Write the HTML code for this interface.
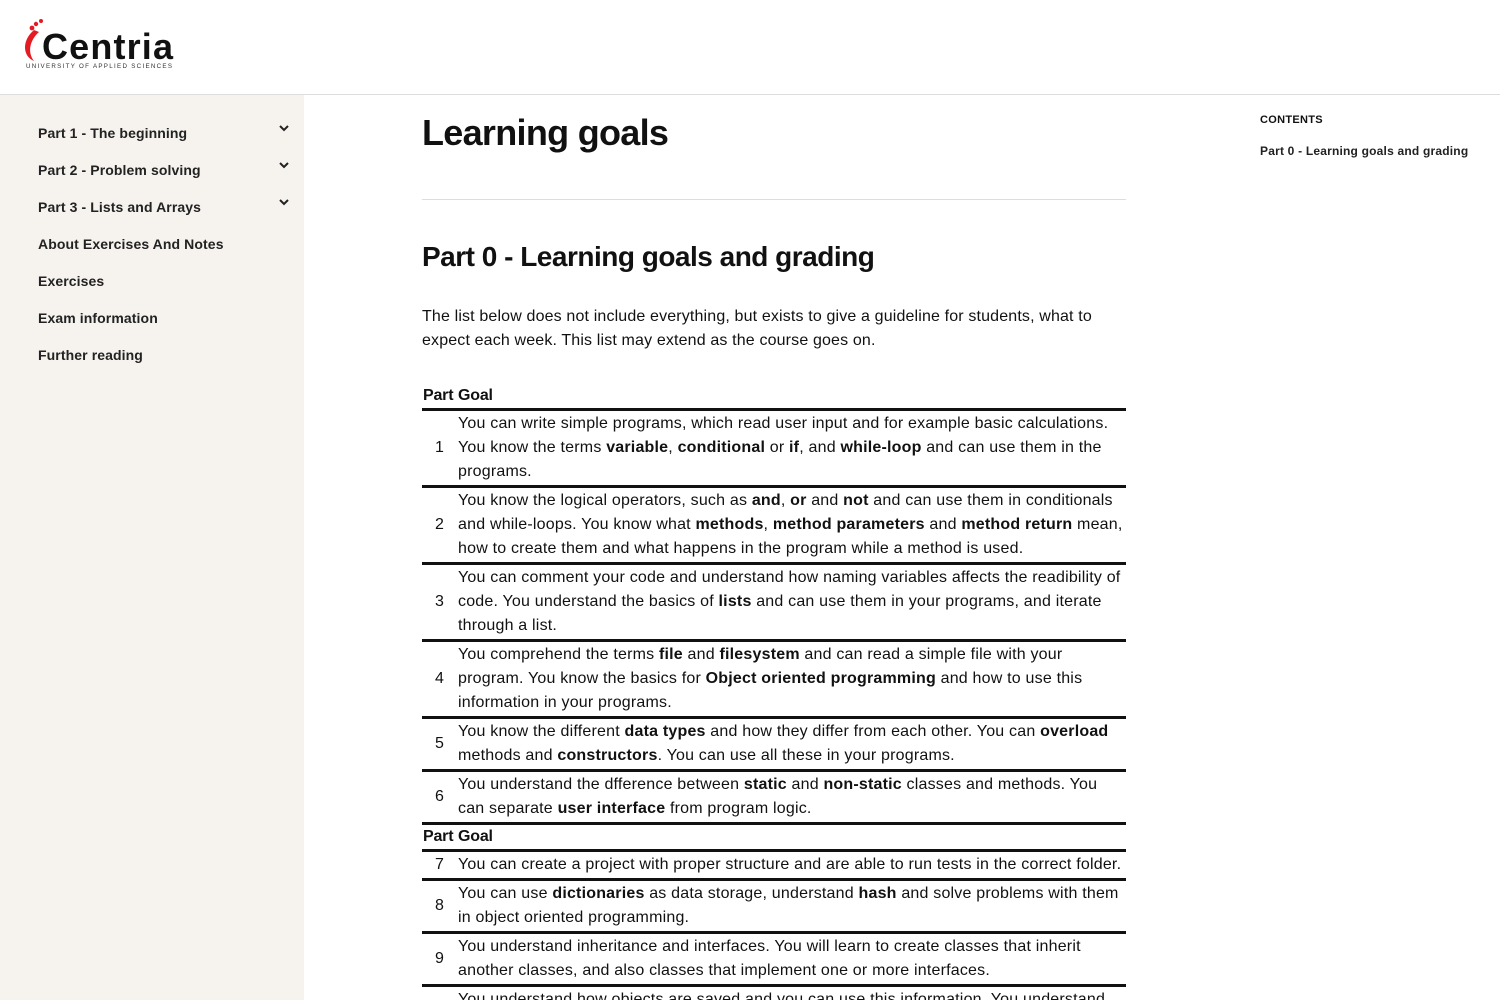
<!DOCTYPE html>
<html><head><meta charset="utf-8">
<style>
*{box-sizing:border-box;margin:0;padding:0}
html,body{width:1500px;height:1000px;overflow:hidden}
body{font-family:"Liberation Sans",sans-serif;color:#111;background:#fff;position:relative}
.hdr{position:absolute;left:0;top:0;width:1500px;height:95px;border-bottom:1px solid #ddd;background:#fff}
.side{position:absolute;left:0;top:95px;width:304px;height:905px;background:#f6f3ef}
.side div{position:absolute;left:38px;font-size:14px;font-weight:bold;color:#222;letter-spacing:0.1px}
.chev{position:absolute;left:278px;width:12px;height:8px}
.main{position:absolute;left:422px;top:95px;width:704px;height:905px;overflow:hidden}
h1{position:absolute;top:17px;font-size:36px;font-weight:bold;letter-spacing:-0.7px}
hr{position:absolute;top:104px;width:704px;border:0;border-top:1px solid #ddd}
h2{position:absolute;top:146px;font-size:28px;font-weight:bold;letter-spacing:-0.5px;white-space:nowrap}
p{position:absolute;top:210px;font-size:16px;line-height:24px;width:704px;letter-spacing:0.15px}
table{position:absolute;top:289px;width:704px;border-collapse:collapse;font-size:16px;line-height:24px;letter-spacing:0.2px}
th{text-align:left;font-weight:bold;padding:0 1px;height:24px;letter-spacing:-0.2px}
td{padding:1px 1px;vertical-align:middle}
td:first-child{text-align:center;width:35px}
tr{border-bottom:3px solid #111}
.toc{position:absolute;left:1260px;top:114px;font-size:11px;font-weight:bold;letter-spacing:0.3px}
.toc2{position:absolute;left:1260px;top:144px;font-size:12px;font-weight:bold;color:#222;letter-spacing:0.2px}
</style></head><body>
<div class="hdr">
<svg style="position:absolute;left:22px;top:16px" width="156" height="56">
<circle cx="19" cy="5" r="2" fill="#e41b23"/><circle cx="14" cy="8" r="2.2" fill="#e41b23"/><circle cx="10" cy="12" r="2.4" fill="#e41b23"/>
<path d="M12 14 C0 24 0 40 12 45 C5 36 8 24 17 16 Z" fill="#e41b23"/>
<text x="20" y="43" font-family="Liberation Sans" font-weight="bold" font-size="36" fill="#111" textLength="130" letter-spacing="-1">Centria</text>
<text x="4" y="52" font-family="Liberation Sans" font-size="6.2" fill="#333" textLength="146">UNIVERSITY OF APPLIED SCIENCES</text>
</svg>
</div>
<div class="side">
<div style="top:30px">Part 1 - The beginning</div>
<div style="top:67px">Part 2 - Problem solving</div>
<div style="top:104px">Part 3 - Lists and Arrays</div>
<div style="top:141px">About Exercises And Notes</div>
<div style="top:178px">Exercises</div>
<div style="top:215px">Exam information</div>
<div style="top:252px">Further reading</div>
<svg class="chev" style="top:29px" viewBox="0 0 12 8"><path d="M2 2l4 4 4-4" stroke="#222" stroke-width="2" fill="none"/></svg>
<svg class="chev" style="top:66px" viewBox="0 0 12 8"><path d="M2 2l4 4 4-4" stroke="#222" stroke-width="2" fill="none"/></svg>
<svg class="chev" style="top:103px" viewBox="0 0 12 8"><path d="M2 2l4 4 4-4" stroke="#222" stroke-width="2" fill="none"/></svg>
</div>
<div class="main">
<h1>Learning goals</h1>
<hr>
<h2>Part 0 - Learning goals and grading</h2>
<p>The list below does not include everything, but exists to give a guideline for students, what to expect each week. This list may extend as the course goes on.</p>
<table>
<tr><th>Part</th><th>Goal</th></tr>
<tr><td>1</td><td>You can write simple programs, which read user input and for example basic calculations. You know the terms <b>variable</b>, <b>conditional</b> or <b>if</b>, and <b>while-loop</b> and can use them in the programs.</td></tr>
<tr><td>2</td><td>You know the logical operators, such as <b>and</b>, <b>or</b> and <b>not</b> and can use them in conditionals and while-loops. You know what <b>methods</b>, <b>method parameters</b> and <b>method return</b> mean, how to create them and what happens in the program while a method is used.</td></tr>
<tr><td>3</td><td>You can comment your code and understand how naming variables affects the readibility of code. You understand the basics of <b>lists</b> and can use them in your programs, and iterate through a list.</td></tr>
<tr><td>4</td><td>You comprehend the terms <b>file</b> and <b>filesystem</b> and can read a simple file with your program. You know the basics for <b>Object oriented programming</b> and how to use this information in your programs.</td></tr>
<tr><td>5</td><td>You know the different <b>data types</b> and how they differ from each other. You can <b>overload</b> methods and <b>constructors</b>. You can use all these in your programs.</td></tr>
<tr><td>6</td><td>You understand the dfference between <b>static</b> and <b>non-static</b> classes and methods. You can separate <b>user interface</b> from program logic.</td></tr>
<tr><th>Part</th><th>Goal</th></tr>
<tr><td>7</td><td>You can create a project with proper structure and are able to run tests in the correct folder.</td></tr>
<tr><td>8</td><td>You can use <b>dictionaries</b> as data storage, understand <b>hash</b> and solve problems with them in object oriented programming.</td></tr>
<tr><td>9</td><td>You understand inheritance and interfaces. You will learn to create classes that inherit another classes, and also classes that implement one or more interfaces.</td></tr>
<tr><td>10</td><td>You understand how objects are saved and you can use this information. You understand more.</td></tr>
</table>
</div>
<div class="toc">CONTENTS</div>
<div class="toc2">Part 0 - Learning goals and grading</div>
</body></html>
